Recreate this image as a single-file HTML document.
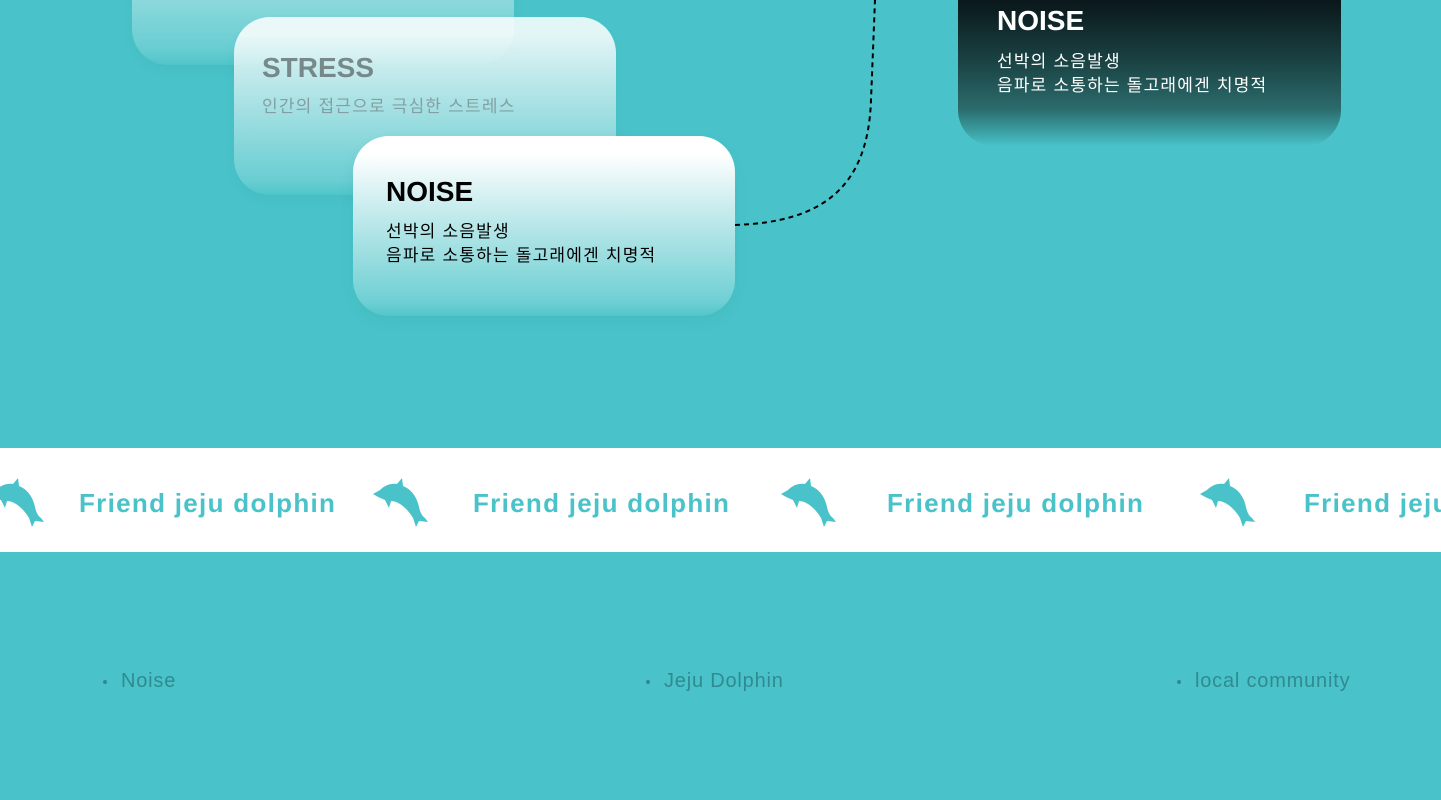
<!DOCTYPE html>
<html><head><meta charset="utf-8"><style>
*{margin:0;padding:0;box-sizing:border-box}
body{width:1441px;height:800px;overflow:hidden;background:#49c3c9;position:relative;font-family:"Liberation Sans","Noto Sans CJK KR",sans-serif}
.card{position:absolute;width:382px;border-radius:36px;background:linear-gradient(180deg,#fff 0%,#fff 10%,#c9ecee 40%,#8cd9dc 75%,#6fd0d4 92%,#52c6cb 100%);box-shadow:0 6px 12px rgba(40,140,150,.12)}
.card h3{position:absolute;left:33px;font-size:28px;font-weight:bold}
.card p{position:absolute;left:33px;font-size:17px;line-height:24px;letter-spacing:1.2px;white-space:nowrap}
.band{position:absolute;left:0;top:448px;width:1441px;height:104px;background:#fff}
.t{position:absolute;top:488px;font-size:26px;font-weight:bold;color:#49c3c9;letter-spacing:1.3px;white-space:nowrap}
.dol{position:absolute;top:477px;width:56px;height:50px}
.li{position:absolute;top:670px;font-size:20px;color:#2f8b90;letter-spacing:.8px}
.li:before{content:"";position:absolute;left:-18px;top:10px;width:4px;height:4px;border-radius:50%;background:#2f8b90}
</style></head><body>
<div class="card" style="left:132px;top:-120px;height:185px;opacity:.8"></div>
<div class="card" style="left:234px;top:17px;height:178px;opacity:.85">
<h3 style="top:35px;left:28px;color:#7f7f7f">STRESS</h3>
<p style="top:78px;left:28px;color:#8c9a9b">인간의 접근으로 극심한 스트레스</p></div>
<div class="card" style="left:353px;top:136px;height:180px">
<h3 style="top:40px;color:#000">NOISE</h3>
<p style="top:84px;color:#000">선박의 소음발생<br>음파로 소통하는 돌고래에겐 치명적</p></div>
<div style="position:absolute;left:958px;top:-40px;width:383px;height:186px;border-radius:36px;background:linear-gradient(180deg,#03080a 0%,#0b1b1e 25%,#1b4344 55%,#2b6b6c 80%,#3a9fa3 92%,#49c3c9 100%)">
<h3 style="position:absolute;left:39px;top:45px;font-size:28px;font-weight:bold;color:#fff">NOISE</h3>
<p style="position:absolute;left:39px;top:90px;font-size:17px;line-height:24px;letter-spacing:1.2px;color:#fff;white-space:nowrap">선박의 소음발생<br>음파로 소통하는 돌고래에겐 치명적</p></div>
<svg style="position:absolute;left:0;top:0" width="1441" height="448"><path d="M735 225 C820 222 868 190 871 100 L875 0" fill="none" stroke="#000" stroke-width="2" stroke-dasharray="5 4"/></svg>
<div class="band"></div>
<svg width="0" height="0" style="position:absolute"><defs><symbol id="d" viewBox="0 0 56 50"><path d="M1 17 L8 13 C13 8 19 6 25 7 L30 1 L31 9 C39 12 45 20 47 30 C48 35 50 39 53 41 L56 45 L47 44 L44 50 L41 41 C38 36 34 31 28 27 C25 25 22 24 19 24 L17 31 L13 23 C8 21 4 19 1 17 Z" fill="#49c3c9"/></symbol></defs></svg>
<svg class="dol" style="left:-12px"><use href="#d"/></svg>
<svg class="dol" style="left:372px"><use href="#d"/></svg>
<svg class="dol" style="left:780px"><use href="#d"/></svg>
<svg class="dol" style="left:1199px"><use href="#d"/></svg>
<div class="t" style="left:79px">Friend jeju dolphin</div>
<div class="t" style="left:473px">Friend jeju dolphin</div>
<div class="t" style="left:887px">Friend jeju dolphin</div>
<div style="position:absolute;left:1304px;top:480px;width:137px;height:50px;overflow:hidden"><div class="t" style="left:0;top:8px">Friend jeju dolphin</div></div>
<div class="li" style="left:121px">Noise</div>
<div class="li" style="left:664px">Jeju Dolphin</div>
<div class="li" style="left:1195px">local community</div>
</body></html>
